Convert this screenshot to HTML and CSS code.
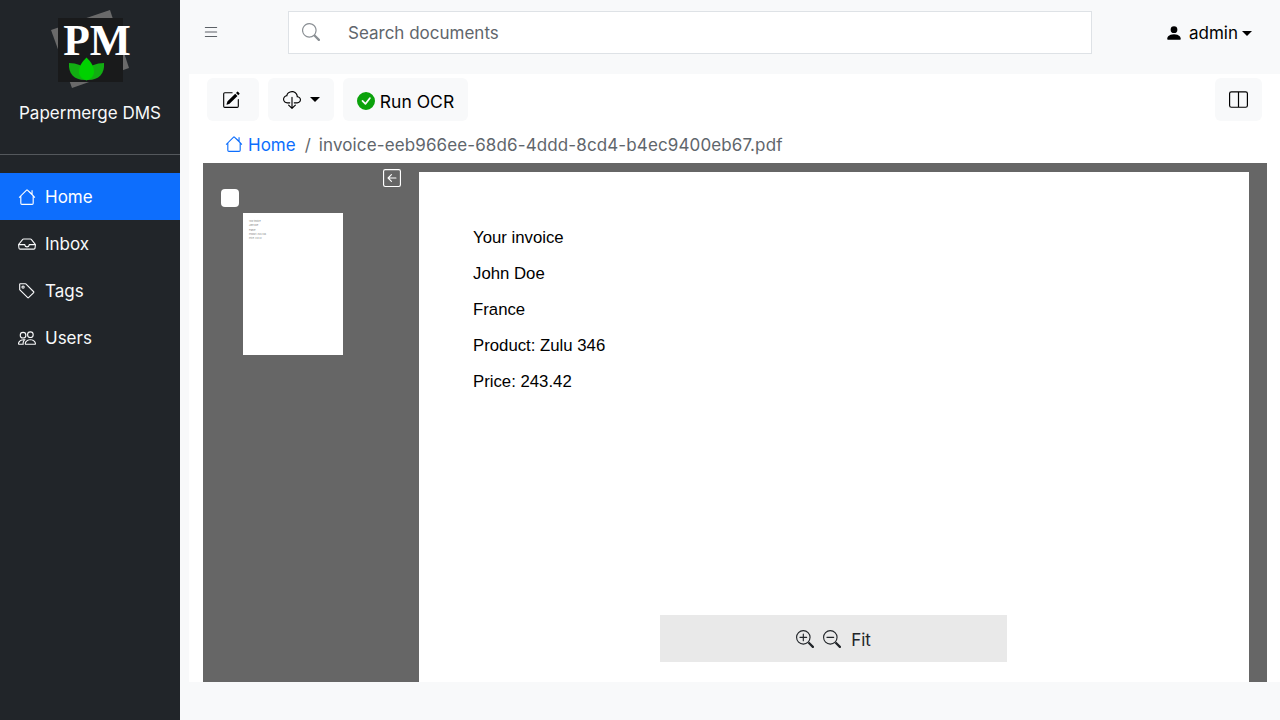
FILE: index.html
```html
<!DOCTYPE html>
<html lang="en">
<head>
    <meta charset="UTF-8">
    <title>Papermerge DMS</title>
    <link rel="stylesheet" href="styles.css">
</head>
<body>
<div class="app">
    <nav class="sidebar">
        <div class="brand">
            <svg class="logo" width="90" height="90" viewBox="0 0 90 90">
                <polygon points="65,6 84,64 27,84 6,26" fill="#6a6a6a"/>
                <rect x="13" y="14" width="65" height="64" fill="#191a1b"/>
                <text x="52" y="51" text-anchor="middle" class="logo-text">PM</text>
                <path d="M24 59C32 59 38 62 42 66L42 76C30 77 23 70 24 59z" fill="#12ad12"/>
                <path d="M59 59C51 59 45 62 41 66L41 76C53 77 60 70 59 59z" fill="#12ad12"/>
                <path d="M41.500 53.500C46 58 49 62 49 68C49 72 46 75 41.500 76.500C37 75 34 72 34 68C34 62 37 58 41.500 53.500z" fill="#00d200"/>
            </svg>
            <div class="brand-name">Papermerge DMS</div>
        </div>
        <ul class="menu">
            <li class="menu-item active">
                <svg viewBox="0 0 16 16" class="icon"><path d="M8.700 1.500a1 1 0 0 0-1.400 0L.650 8.150l.7.700L2 8.200V13.500A1.500 1.500 0 0 0 3.500 15h9a1.500 1.500 0 0 0 1.500-1.500V8.200l.650.650.7-.7L13 5.500V2h-1v2.500zM13 7.200V13.500a.5.500 0 0 1-.5.500h-9a.5.500 0 0 1-.5-.5V7.200l5-5z"/></svg>
                <span>Home</span>
            </li>
            <li class="menu-item">
                <svg viewBox="0 0 16 16" class="icon"><path d="M4.980 4a.5.500 0 0 0-.39.188L1.540 8H6a.5.500 0 0 1 .5.500 1.500 1.500 0 1 0 3 0A.5.500 0 0 1 10 8h4.460l-3.050-3.812A.5.500 0 0 0 11.020 4H4.980zm-1.170-.437A1.500 1.500 0 0 1 4.980 3h6.040a1.500 1.500 0 0 1 1.170.563l3.700 4.625a.5.500 0 0 1 .106.374l-.390 3.124A1.500 1.500 0 0 1 14.117 13H1.883a1.500 1.500 0 0 1-1.489-1.314l-.39-3.124a.5.500 0 0 1 .106-.374l3.700-4.625zM1.010 9l.377 3.012A.5.500 0 0 0 1.883 12h12.234a.5.500 0 0 0 .496-.438L14.990 9H10.450a2.500 2.500 0 0 1-4.900 0H1.010z"/></svg>
                <span>Inbox</span>
            </li>
            <li class="menu-item">
                <svg viewBox="0 0 16 16" class="icon"><path d="M6 4.500a1.500 1.500 0 1 1-3 0 1.500 1.500 0 0 1 3 0zm-1 0a.5.500 0 1 0-1 0 .5.500 0 0 0 1 0z"/><path d="M2 1h4.586a1 1 0 0 1 .707.293l7 7a1 1 0 0 1 0 1.414l-4.586 4.586a1 1 0 0 1-1.414 0l-7-7A1 1 0 0 1 1 6.586V2a1 1 0 0 1 1-1zm0 5.586l7 7L13.586 9l-7-7H2v4.586z"/></svg>
                <span>Tags</span>
            </li>
            <li class="menu-item">
                <svg viewBox="0 0 16 16" class="icon"><path d="M15 14s1 0 1-1-1-4-5-4-5 3-5 4 1 1 1 1h8zm-7.980-1A.261.261 0 0 1 7 12.996c.001-.264.167-1.030.76-1.720C8.312 10.629 9.282 10 11 10c1.717 0 2.687.630 3.240 1.276.593.690.758 1.457.760 1.720l-.008.002A.274.274 0 0 1 14.980 13H7.020zM11 7a2 2 0 1 0 0-4 2 2 0 0 0 0 4zm3-2a3 3 0 1 1-6 0 3 3 0 0 1 6 0zM6.936 9.280a5.880 5.880 0 0 0-1.230-.247A7.350 7.350 0 0 0 5 9c-4 0-5 3-5 4 0 .667.333 1 1 1h4.216A2.238 2.238 0 0 1 5 13c0-1.010.377-2.042 1.090-2.904.243-.294.526-.569.846-.816zM4.920 10A5.420 5.420 0 0 0 4 13H1c0-.260.164-1.030.760-1.724.545-.636 1.492-1.256 3.160-1.275zM1.500 5.500a3 3 0 1 1 6 0 3 3 0 0 1-6 0zm3-2a2 2 0 1 0 0 4 2 2 0 0 0 0-4z"/></svg>
                <span>Users</span>
            </li>
        </ul>
    </nav>
    <div class="main">
        <header class="topbar">
            <svg viewBox="0 0 16 16" class="toggle"><path fill-rule="evenodd" d="M2.500 12a.5.500 0 0 1 .5-.5h10a.5.500 0 0 1 0 1H3a.5.500 0 0 1-.5-.5zm0-4a.5.500 0 0 1 .5-.5h10a.5.500 0 0 1 0 1H3a.5.500 0 0 1-.5-.5zm0-4a.5.500 0 0 1 .5-.5h10a.5.500 0 0 1 0 1H3a.5.500 0 0 1-.5-.5z"/></svg>
            <div class="search">
                <svg viewBox="0 0 16 16" class="search-icon"><path d="M11.742 10.344a6.500 6.500 0 1 0-1.397 1.398h-.001c.03.040.062.078.098.115l3.850 3.850a1 1 0 0 0 1.415-1.414l-3.850-3.850a1.007 1.007 0 0 0-.115-.1zM12 6.500a5.500 5.500 0 1 1-11 0 5.500 5.500 0 0 1 11 0z"/></svg>
                <span class="search-text">Search documents</span>
            </div>
            <div class="user">
                <svg viewBox="0 0 16 16" class="user-icon"><path d="M3 14s-1 0-1-1 1-4 6-4 6 3 6 4-1 1-1 1H3zm5-6a3 3 0 1 0 0-6 3 3 0 0 0 0 6z"/></svg>
                <span>admin</span>
                <span class="caret"></span>
            </div>
        </header>
        <div class="content">
            <div class="toolbar">
                <button class="btn btn-square">
                    <svg viewBox="0 0 16 16" class="icon"><path d="M15.502 1.940a.5.500 0 0 1 0 .706L14.459 3.690l-2-2L13.502.646a.5.500 0 0 1 .707 0l1.293 1.293zm-1.750 2.456-2-2L4.939 9.210a.5.500 0 0 0-.121.196l-.805 2.414a.25.250 0 0 0 .316.316l2.414-.805a.5.500 0 0 0 .196-.120l6.813-6.814z"/><path fill-rule="evenodd" d="M1 13.500A1.500 1.500 0 0 0 2.500 15h11a1.500 1.500 0 0 0 1.500-1.500v-6a.5.500 0 0 0-1 0v6a.5.500 0 0 1-.5.500h-11a.5.500 0 0 1-.5-.5v-11a.5.500 0 0 1 .5-.5H9a.5.500 0 0 0 0-1H2.500A1.500 1.500 0 0 0 1 2.500v11z"/></svg>
                </button>
                <button class="btn btn-download">
                    <svg viewBox="0 0 16 16" class="icon-lg"><path d="M4.406 1.342A5.530 5.530 0 0 1 8 0c2.690 0 4.923 2 5.166 4.579C14.758 4.804 16 6.137 16 7.773 16 9.569 14.502 11 12.687 11H10a.5.500 0 0 1 0-1h2.688C13.979 10 15 8.988 15 7.773c0-1.216-1.020-2.228-2.313-2.228h-.5v-.5C12.188 2.825 10.328 1 8 1a4.530 4.530 0 0 0-2.941 1.100c-.757.652-1.153 1.438-1.153 2.055v.448l-.445.049C2.064 4.805 1 5.952 1 7.318 1 8.785 2.230 10 3.781 10H6a.5.500 0 0 1 0 1H3.781C1.708 11 0 9.366 0 7.318c0-1.763 1.266-3.223 2.942-3.593.143-.863.698-1.723 1.464-2.383z"/><path d="M7.646 15.854a.5.500 0 0 0 .708 0l3-3a.5.500 0 0 0-.708-.708L8.500 14.293V5.500a.5.500 0 0 0-1 0v8.793l-2.146-2.147a.5.500 0 0 0-.708.708l3 3z"/></svg>
                    <span class="caret"></span>
                </button>
                <button class="btn btn-ocr">
                    <svg viewBox="0 0 16 16" class="ocr-icon"><path d="M16 8A8 8 0 1 1 0 8a8 8 0 0 1 16 0zm-3.970-3.030a.75.750 0 0 0-1.080.022L7.477 9.417 5.384 7.323a.75.750 0 0 0-1.060 1.060L6.970 11.030a.75.750 0 0 0 1.079-.020l3.992-4.990a.75.750 0 0 0-.010-1.050z"/></svg>
                    <span>Run OCR</span>
                </button>
                <button class="btn btn-panel">
                    <svg viewBox="0 0 16 16" class="icon-lg"><path d="M0 3a2 2 0 0 1 2-2h12a2 2 0 0 1 2 2v10a2 2 0 0 1-2 2H2a2 2 0 0 1-2-2V3zm8.500-1v12H14a1 1 0 0 0 1-1V3a1 1 0 0 0-1-1H8.500zm-1 0H2a1 1 0 0 0-1 1v10a1 1 0 0 0 1 1h5.500V2z"/></svg>
                </button>
            </div>
            <div class="breadcrumb">
                <svg viewBox="0 0 16 16" class="crumb-icon"><path d="M8.700 1.500a1 1 0 0 0-1.400 0L.650 8.150l.7.700L2 8.200V13.500A1.500 1.500 0 0 0 3.500 15h9a1.500 1.500 0 0 0 1.500-1.500V8.200l.650.650.7-.7L13 5.500V2h-1v2.500zM13 7.200V13.500a.5.500 0 0 1-.5.500h-9a.5.500 0 0 1-.5-.5V7.200l5-5z"/></svg>
                <span class="crumb-link">Home</span>
                <span class="crumb-sep">/</span>
                <span class="crumb-doc">invoice-eeb966ee-68d6-4ddd-8cd4-b4ec9400eb67.pdf</span>
            </div>
            <div class="viewer">
                <div class="thumbs">
                    <div class="thumbs-head">
                        <svg viewBox="0 0 16 16" class="collapse"><path d="M15 2a1 1 0 0 0-1-1H2a1 1 0 0 0-1 1v12a1 1 0 0 0 1 1h12a1 1 0 0 0 1-1V2zM0 2a2 2 0 0 1 2-2h12a2 2 0 0 1 2 2v12a2 2 0 0 1-2 2H2a2 2 0 0 1-2-2V2zm11.500 5.500a.5.500 0 0 1 0 1H5.707l2.147 2.146a.5.500 0 0 1-.708.708l-3-3a.5.500 0 0 1 0-.708l3-3a.5.500 0 1 1 .708.708L5.707 7.500H11.500z"/></svg>
                    </div>
                    <div class="check"></div>
                    <div class="thumb">
                        <p>Your invoice</p>
                        <p>John Doe</p>
                        <p>France</p>
                        <p>Product: Zulu 346</p>
                        <p>Price: 243.42</p>
                    </div>
                </div>
                <div class="page">
                    <div class="page-text">
                        <p>Your invoice</p>
                        <p>John Doe</p>
                        <p>France</p>
                        <p>Product: Zulu 346</p>
                        <p>Price: 243.42</p>
                    </div>
                    <div class="zoom-bar">
                        <svg viewBox="0 0 16 16" class="zoom-icon"><path fill-rule="evenodd" d="M6.500 12a5.500 5.500 0 1 0 0-11 5.500 5.500 0 0 0 0 11zM13 6.500a6.500 6.500 0 1 1-13 0 6.500 6.500 0 0 1 13 0z"/><path d="M10.344 11.742c.03.040.062.078.098.115l3.850 3.850a1 1 0 0 0 1.415-1.414l-3.850-3.850a1.007 1.007 0 0 0-.115-.1 6.538 6.538 0 0 1-1.398 1.400z"/><path fill-rule="evenodd" d="M6.500 3a.5.500 0 0 1 .5.500V6h2.500a.5.500 0 0 1 0 1H7v2.500a.5.500 0 0 1-1 0V7H3.500a.5.500 0 0 1 0-1H6V3.500a.5.500 0 0 1 .5-.5z"/></svg>
                        <svg viewBox="0 0 16 16" class="zoom-icon"><path fill-rule="evenodd" d="M6.500 12a5.500 5.500 0 1 0 0-11 5.500 5.500 0 0 0 0 11zM13 6.500a6.500 6.500 0 1 1-13 0 6.500 6.500 0 0 1 13 0z"/><path d="M10.344 11.742c.03.040.062.078.098.115l3.850 3.850a1 1 0 0 0 1.415-1.414l-3.850-3.850a1.007 1.007 0 0 0-.115-.1 6.538 6.538 0 0 1-1.398 1.400z"/><path fill-rule="evenodd" d="M3 6.500a.5.500 0 0 1 .5-.5h6a.5.500 0 0 1 0 1h-6a.5.500 0 0 1-.5-.5z"/></svg>
                        <span class="fit">Fit</span>
                    </div>
                </div>
            </div>
        </div>
    </div>
</div>
</body>
</html>
```

FILE: styles.css
```css
* {
    padding: 0;
    margin: 0;
    box-sizing: border-box;
    list-style: none;
}

body {
    font-family: Inter, "Liberation Sans", sans-serif;
    font-size: 17px;
    line-height: 27px;
    color: #212529;
    background: #f8f9fa;
    overflow: hidden;
}

svg {
    fill: currentColor;
    display: block;
    flex: none;
}

.app {
    display: flex;
    width: 1280px;
    height: 720px;
}

/* sidebar */
.sidebar {
    width: 180px;
    flex: none;
    background: #212529;
    color: #f8f9fa;
}

.brand {
    height: 155px;
    border-bottom: 1px solid #54585c;
    display: flex;
    flex-direction: column;
    align-items: center;
    padding: 4px 0 0 0;
}

.logo {
    margin-bottom: 6px;
}

.logo-text {
    font-family: "Liberation Serif", serif;
    font-weight: bold;
    font-size: 43.500px;
    fill: #fff;
}

.menu {
    margin-top: 18px;
}

.menu-item {
    height: 47px;
    display: flex;
    align-items: center;
    gap: 9px;
    padding-left: 18px;
}

.menu-item span {
    padding-top: 2px;
}

.menu-item.active {
    background: #0d6efd;
    color: #fff;
}

.icon {
    width: 18px;
    height: 18px;
}

/* top bar */
.main {
    flex: 1;
    min-width: 0;
    display: flex;
    flex-direction: column;
}

.topbar {
    height: 74px;
    flex: none;
    display: flex;
    align-items: center;
    padding: 0 28px 10px 22px;
}

.toggle {
    width: 18px;
    height: 18px;
    color: #5c6166;
}

.search {
    width: 804px;
    height: 43px;
    margin-left: 68px;
    background: #fff;
    border: 1px solid #dee2e6;
    display: flex;
    align-items: center;
    padding-left: 13px;
    color: #5f666c;
}

.search-icon {
    width: 18px;
    height: 18px;
    color: #8a8f94;
}

.search-text {
    margin-left: 28px;
    padding-top: 2px;
}

.user {
    margin-left: auto;
    padding-top: 2px;
    display: flex;
    align-items: center;
    color: #000;
}

.user-icon {
    width: 18px;
    height: 18px;
    margin-right: 6px;
}

.caret {
    display: inline-block;
    margin-left: 4px;
    border-top: 5px solid currentColor;
    border-left: 5px solid transparent;
    border-right: 5px solid transparent;
}

/* content */
.content {
    margin-left: 9px;
    height: 608px;
    background: #fff;
    display: flex;
    flex-direction: column;
}

.toolbar {
    display: flex;
    padding: 4px 18px 0 18px;
    gap: 9px;
}

.btn {
    height: 43px;
    border: 0;
    border-radius: 6px;
    background: #f8f9fa;
    color: #000;
    font: inherit;
    display: flex;
    align-items: center;
    justify-content: center;
}

.btn-square {
    width: 52px;
    padding-right: 4px;
}

.btn-download {
    width: 66px;
    gap: 5px;
}

.icon-lg {
    width: 18px;
    height: 18px;
}

.btn-ocr {
    width: 125px;
    gap: 5px;
    padding-top: 3px;
    font-size: 17.500px;
}

.ocr-icon {
    width: 18px;
    height: 18px;
    color: #0ba20b;
}

.btn-panel {
    width: 47px;
    margin-left: auto;
}

.btn-panel .icon-lg {
    width: 19px;
    height: 19px;
}

.breadcrumb {
    height: 42px;
    flex: none;
    display: flex;
    align-items: center;
    padding: 3px 0 0 36px;
    color: #5f666c;
}

.breadcrumb span {
    padding-top: 4px;
}

.crumb-icon {
    width: 18px;
    height: 18px;
    color: #0d6efd;
}

.crumb-link {
    color: #0d6efd;
    margin-left: 5px;
}

.crumb-sep {
    margin-left: 9px;
}

.crumb-doc {
    margin-left: 8px;
    letter-spacing: 0.120px;
}

/* viewer */
.viewer {
    flex: 1;
    min-height: 0;
    margin: 0 13px 0 14px;
    background: #666;
    display: flex;
    padding: 9px 18px 0 0;
    overflow: hidden;
}

.thumbs {
    width: 216px;
    flex: none;
    padding-left: 18px;
}

.thumbs-head {
    display: flex;
    justify-content: flex-end;
    padding-right: 18px;
    height: 17px;
}

.collapse {
    width: 18px;
    height: 18px;
    color: #fff;
    margin-top: -3px;
}

.check {
    width: 18px;
    height: 18px;
    background: #fff;
    border-radius: 4px;
}

.thumb {
    width: 100px;
    height: 142px;
    background: #fff;
    margin: 6px 0 0 22px;
    padding: 6px 0 0 6px;
    overflow: hidden;
}

.thumb p {
    font-size: 2px;
    line-height: 4.300px;
    color: #777;
}

.page {
    flex: 1;
    background: #fff;
    position: relative;
    min-width: 0;
}

.page-text {
    padding: 48px 0 0 54px;
    color: #000;
    font-family: "Liberation Sans", sans-serif;
}

.page-text p {
    font-size: 16.750px;
    line-height: 36px;
}

/* floats over the page */
.zoom-bar {
    position: absolute;
    left: 241px;
    bottom: 20px;
    width: 347px;
    height: 47px;
    background: #e9e9e9;
    display: flex;
    align-items: center;
    justify-content: center;
    color: #212529;
}

.zoom-icon {
    width: 18px;
    height: 18px;
    margin-right: 9px;
}

.fit {
    margin-left: 1px;
    padding-top: 4px;
}
```
